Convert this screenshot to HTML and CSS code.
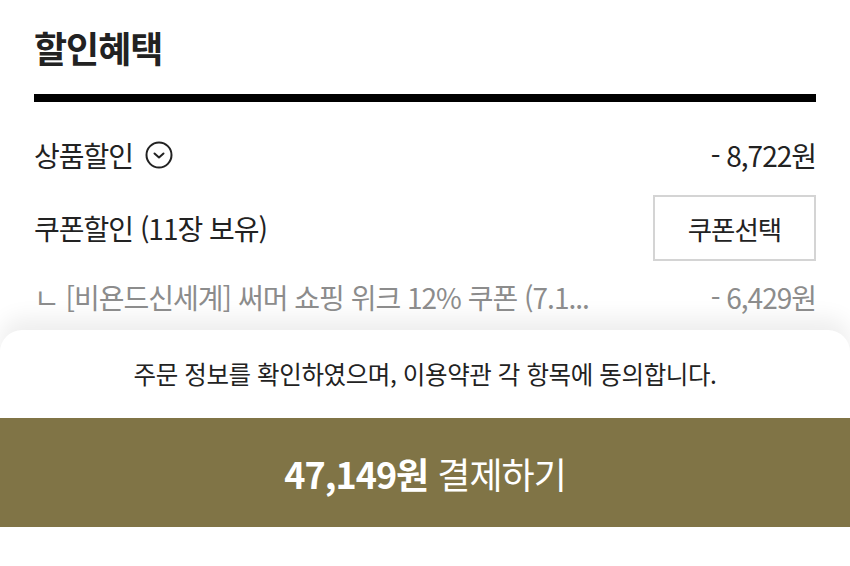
FILE: index.html
```html
<!DOCTYPE html>
<html lang="ko">

<head>
    <meta charset="UTF-8">
    <meta name="viewport" content="width=device-width, initial-scale=1.0">
    <title>할인혜택</title>
    <link rel="stylesheet" href="styles.css">
</head>

<body>
    <section class="benefit">
        <h2 class="benefit-title">할인혜택</h2>
        <div class="benefit-row row-product">
            <div class="row-label">
                상품할인
                <svg class="toggle-icon" width="28" height="28" viewBox="0 0 28 28">
                    <circle cx="14" cy="14" r="12.5" fill="none" stroke="#222" stroke-width="2" />
                    <path d="M9.5 12.5 L14 16.5 L18.5 12.5" fill="none" stroke="#222" stroke-width="2"
                        stroke-linecap="round" stroke-linejoin="round" />
                </svg>
            </div>
            <div class="row-price">- 8,722원</div>
        </div>
        <div class="benefit-row row-coupon">
            <div class="row-label">쿠폰할인 (11장 보유)</div>
            <button class="coupon-btn">쿠폰선택</button>
        </div>
        <div class="benefit-row row-sub">
            <div class="row-label">ㄴ [비욘드신세계] 써머 쇼핑 위크 12% 쿠폰 (7.1...</div>
            <div class="row-price">- 6,429원</div>
        </div>
    </section>

    <div class="pay-sheet">
        <p class="agree-text">주문 정보를 확인하였으며, 이용약관 각 항목에 동의합니다.</p>
        <button class="pay-btn"><b>47,149원</b> 결제하기</button>
    </div>
</body>

</html>
```

FILE: styles.css
```css
* {
    margin: 0;
    padding: 0;
    box-sizing: border-box;
}

body {
    width: 850px;
    height: 566px;
    overflow: hidden;
    background-color: #ffffff;
    color: #222222;
    font-family: "Noto Sans CJK KR", "Noto Sans", sans-serif;
}

.benefit {
    padding: 0 34px;
}

.benefit-title {
    padding-top: 22px;
    height: 102px;
    font-size: 36px;
    line-height: 50px;
    font-weight: 700;
    letter-spacing: -1px;
    border-bottom: 8px solid #000000;
}

.benefit-row {
    display: flex;
    align-items: center;
    justify-content: space-between;
    font-size: 28px;
    letter-spacing: -1px;
}

.row-product {
    margin-top: 18px;
    height: 70px;
}

.row-coupon {
    height: 76px;
}

.row-sub {
    height: 62px;
    color: #8c8c8c;
}

.row-label {
    display: flex;
    align-items: center;
}

.toggle-icon {
    margin-left: 12px;
}

.coupon-btn {
    width: 163px;
    height: 66px;
    border: 2px solid #d4d4d4;
    background-color: #ffffff;
    color: #222222;
    font-family: inherit;
    font-size: 26.5px;
    letter-spacing: -1px;
}

.pay-sheet {
    margin-top: 2px;
    height: 236px;
    padding-top: 28px;
    background-color: #ffffff;
    border-radius: 22px 22px 0 0;
    box-shadow: 0 -12px 22px rgba(0, 0, 0, 0.07);
}

.agree-text {
    text-align: center;
    font-size: 24.5px;
    line-height: 32px;
    letter-spacing: -0.4px;
    color: #222222;
}

.pay-btn {
    display: block;
    width: 100%;
    height: 109px;
    margin-top: 28px;
    border: none;
    background-color: #807446;
    color: #ffffff;
    font-family: inherit;
    font-size: 36px;
    letter-spacing: -1px;
}

.pay-btn b {
    font-weight: 700;
}
```
